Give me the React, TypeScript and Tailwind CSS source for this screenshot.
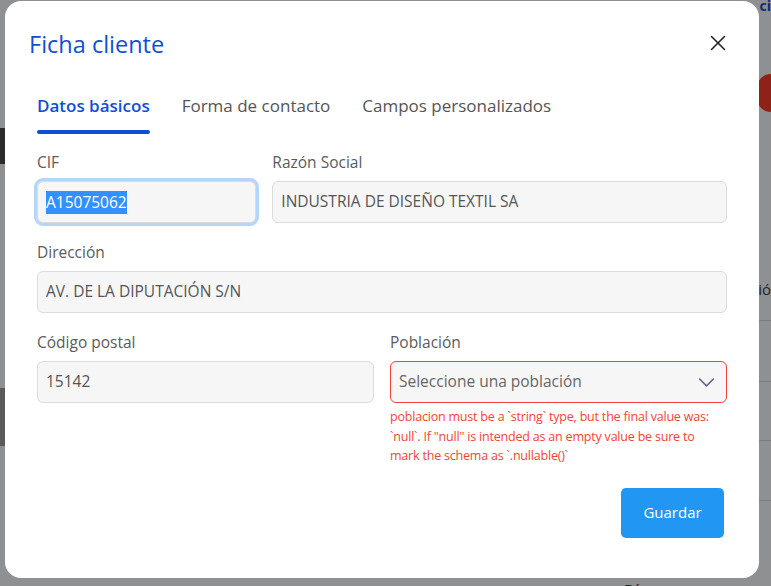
import { X, ChevronDown } from 'lucide-react';

const font = { fontFamily: '"Open Sans", "Noto Sans", sans-serif' };

function Field({ label, span, children }: { label: string; span: string; children: React.ReactNode }) {
  return (
    <div className={span}>
      <div className="mb-2 h-[22px] text-[15.5px] leading-[22px] text-[#5b5b5b]">{label}</div>
      {children}
    </div>
  );
}

function Box({ children, className = '' }: { children: React.ReactNode; className?: string }) {
  return (
    <div className={`flex h-[42px] items-center rounded-md border border-[#d9dce0] bg-[#f6f6f6] px-2 text-[15.5px] text-[#555] ${className}`}>
      {children}
    </div>
  );
}

export default function App() {
  return (
    <div className="relative h-[586px] w-[771px] overflow-hidden bg-[#8f9091]" style={font}>
      {/* dimmed page behind the modal */}
      <div className="absolute left-0 top-[128px] h-[36px] w-[6px] bg-[#2b2b2b]" />
      <div className="absolute left-0 top-[388px] h-[58px] w-[6px] bg-[#5a5a5a]" />
      <div className="absolute right-0 top-[74px] h-[38px] w-[14px] rounded-l-full bg-[#8e2219]" />
      <div className="absolute right-0 top-0 text-[14px] font-bold leading-[12px] text-[#0d2a7a]">ci</div>
      <div className="absolute right-0 top-[278px] text-[15px] text-[#222]">ió</div>
      <div className="absolute right-0 top-[320px] h-px w-[12px] bg-[#7c7c7c]" />
      <div className="absolute right-0 top-[381px] h-px w-[12px] bg-[#7c7c7c]" />
      <div className="absolute right-0 top-[440px] h-px w-[12px] bg-[#7c7c7c]" />
      <div className="absolute right-0 top-[500px] h-px w-[12px] bg-[#7c7c7c]" />
      <div className="absolute left-[624px] top-[578px] text-[15px] text-[#222]">Dí</div>

      {/* modal */}
      <div className="absolute left-[5px] top-[1px] flex h-[577px] w-[754px] flex-col rounded-2xl bg-white">
        <div className="flex items-center justify-between pl-6 pr-[28px] pt-[27px]">
          <h2 className="text-[23.5px] leading-[32px] text-[#0f4fd4]">Ficha cliente</h2>
          <X className="-mt-[2px] h-[26px] w-[26px] text-[#222]" strokeWidth={1.4} />
        </div>

        <div className="px-8 pt-[33px]">
          <div className="flex gap-8 text-[17px] leading-[26px]">
            <div className="flex flex-col">
              <span className="font-semibold text-[#0f4fd4]">Datos básicos</span>
              <span className="mt-[11px] h-[4px] rounded-full bg-[#0f4fd4]" />
            </div>
            <span className="text-[#555]">Forma de contacto</span>
            <span className="text-[#555]">Campos personalizados</span>
          </div>

          <div className="mt-[17px] grid grid-cols-12 gap-x-4 gap-y-[18px]">
            <Field label="CIF" span="col-span-4">
              <Box className="border-[#4b9ef3] shadow-[0_0_0_3px_#b4d6fb]">
                <span className="bg-[#3390ff] leading-[23px] text-white">A15075062</span>
              </Box>
            </Field>
            <Field label="Razón Social" span="col-span-8">
              <Box>INDUSTRIA DE DISEÑO TEXTIL SA</Box>
            </Field>
            <Field label="Dirección" span="col-span-12">
              <Box>AV. DE LA DIPUTACIÓN S/N</Box>
            </Field>
            <Field label="Código postal" span="col-span-6">
              <Box>15142</Box>
            </Field>
            <Field label="Población" span="col-span-6">
              <Box className="justify-between border-[#f44336] pr-[6px] text-[#666]">
                <span>Seleccione una población</span>
                <ChevronDown className="h-[27px] w-[27px] text-[#5d6b85]" strokeWidth={1.3} />
              </Box>
              <p className="mt-[4px] pr-[8px] text-[12.5px] leading-[19.5px] tracking-[-0.2px] text-[#f44336]">
                poblacion must be a `string` type, but the final value was: `null`. If "null" is intended as an empty value be sure to mark the schema as `.nullable()`
              </p>
            </Field>
          </div>

          <div className="mt-[22px] flex justify-end pr-[3px]">
            <button className="h-[50px] w-[103px] rounded-[5px] bg-[#2196f3] text-[15px] text-white">Guardar</button>
          </div>
        </div>
      </div>
    </div>
  );
}
